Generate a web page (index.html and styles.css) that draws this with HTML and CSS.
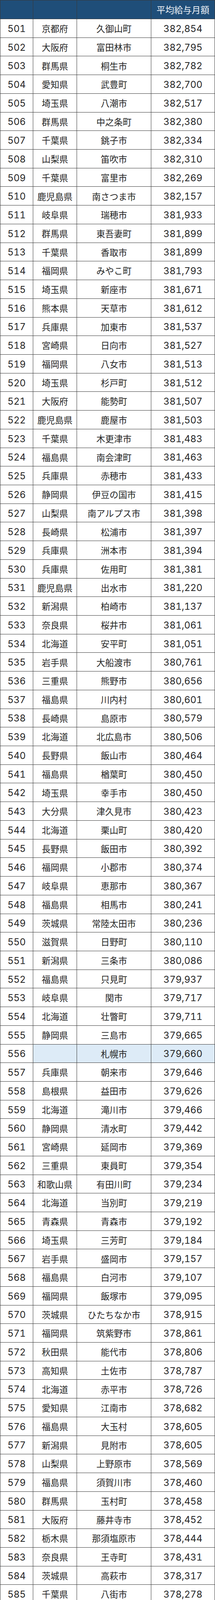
FILE: index.html
```html
<!DOCTYPE html>
<html lang="ja">
<head>
<meta charset="utf-8">
<title>平均給与月額ランキング 501-600</title>
<link rel="stylesheet" href="styles.css">
</head>
<body>
<div class="rank-table">
<div class="cell head"></div><div class="cell head"></div><div class="cell head"></div><div class="cell head jp">平均給与月額</div>
<div class="cell num">501</div><div class="cell jp">京都府</div><div class="cell jp">久御山町</div><div class="cell num">382,854</div>
<div class="cell num">502</div><div class="cell jp">大阪府</div><div class="cell jp">富田林市</div><div class="cell num">382,795</div>
<div class="cell num">503</div><div class="cell jp">群馬県</div><div class="cell jp">桐生市</div><div class="cell num">382,782</div>
<div class="cell num">504</div><div class="cell jp">愛知県</div><div class="cell jp">武豊町</div><div class="cell num">382,700</div>
<div class="cell num">505</div><div class="cell jp">埼玉県</div><div class="cell jp">八潮市</div><div class="cell num">382,517</div>
<div class="cell num">506</div><div class="cell jp">群馬県</div><div class="cell jp">中之条町</div><div class="cell num">382,380</div>
<div class="cell num">507</div><div class="cell jp">千葉県</div><div class="cell jp">銚子市</div><div class="cell num">382,334</div>
<div class="cell num">508</div><div class="cell jp">山梨県</div><div class="cell jp">笛吹市</div><div class="cell num">382,310</div>
<div class="cell num">509</div><div class="cell jp">千葉県</div><div class="cell jp">富里市</div><div class="cell num">382,269</div>
<div class="cell num">510</div><div class="cell jp">鹿児島県</div><div class="cell jp">南さつま市</div><div class="cell num">382,157</div>
<div class="cell num">511</div><div class="cell jp">岐阜県</div><div class="cell jp">瑞穂市</div><div class="cell num">381,933</div>
<div class="cell num">512</div><div class="cell jp">群馬県</div><div class="cell jp">東吾妻町</div><div class="cell num">381,899</div>
<div class="cell num">513</div><div class="cell jp">千葉県</div><div class="cell jp">香取市</div><div class="cell num">381,899</div>
<div class="cell num">514</div><div class="cell jp">福岡県</div><div class="cell jp">みやこ町</div><div class="cell num">381,793</div>
<div class="cell num">515</div><div class="cell jp">埼玉県</div><div class="cell jp">新座市</div><div class="cell num">381,671</div>
<div class="cell num">516</div><div class="cell jp">熊本県</div><div class="cell jp">天草市</div><div class="cell num">381,612</div>
<div class="cell num">517</div><div class="cell jp">兵庫県</div><div class="cell jp">加東市</div><div class="cell num">381,537</div>
<div class="cell num">518</div><div class="cell jp">宮崎県</div><div class="cell jp">日向市</div><div class="cell num">381,527</div>
<div class="cell num">519</div><div class="cell jp">福岡県</div><div class="cell jp">八女市</div><div class="cell num">381,513</div>
<div class="cell num">520</div><div class="cell jp">埼玉県</div><div class="cell jp">杉戸町</div><div class="cell num">381,512</div>
<div class="cell num">521</div><div class="cell jp">大阪府</div><div class="cell jp">能勢町</div><div class="cell num">381,507</div>
<div class="cell num">522</div><div class="cell jp">鹿児島県</div><div class="cell jp">鹿屋市</div><div class="cell num">381,503</div>
<div class="cell num">523</div><div class="cell jp">千葉県</div><div class="cell jp">木更津市</div><div class="cell num">381,483</div>
<div class="cell num">524</div><div class="cell jp">福島県</div><div class="cell jp">南会津町</div><div class="cell num">381,463</div>
<div class="cell num">525</div><div class="cell jp">兵庫県</div><div class="cell jp">赤穂市</div><div class="cell num">381,433</div>
<div class="cell num">526</div><div class="cell jp">静岡県</div><div class="cell jp">伊豆の国市</div><div class="cell num">381,415</div>
<div class="cell num">527</div><div class="cell jp">山梨県</div><div class="cell jp">南アルプス市</div><div class="cell num">381,398</div>
<div class="cell num">528</div><div class="cell jp">長崎県</div><div class="cell jp">松浦市</div><div class="cell num">381,397</div>
<div class="cell num">529</div><div class="cell jp">兵庫県</div><div class="cell jp">洲本市</div><div class="cell num">381,394</div>
<div class="cell num">530</div><div class="cell jp">兵庫県</div><div class="cell jp">佐用町</div><div class="cell num">381,381</div>
<div class="cell num">531</div><div class="cell jp">鹿児島県</div><div class="cell jp">出水市</div><div class="cell num">381,220</div>
<div class="cell num">532</div><div class="cell jp">新潟県</div><div class="cell jp">柏崎市</div><div class="cell num">381,137</div>
<div class="cell num">533</div><div class="cell jp">奈良県</div><div class="cell jp">桜井市</div><div class="cell num">381,061</div>
<div class="cell num">534</div><div class="cell jp">北海道</div><div class="cell jp">安平町</div><div class="cell num">381,051</div>
<div class="cell num">535</div><div class="cell jp">岩手県</div><div class="cell jp">大船渡市</div><div class="cell num">380,761</div>
<div class="cell num">536</div><div class="cell jp">三重県</div><div class="cell jp">熊野市</div><div class="cell num">380,656</div>
<div class="cell num">537</div><div class="cell jp">福島県</div><div class="cell jp">川内村</div><div class="cell num">380,601</div>
<div class="cell num">538</div><div class="cell jp">長崎県</div><div class="cell jp">島原市</div><div class="cell num">380,579</div>
<div class="cell num">539</div><div class="cell jp">北海道</div><div class="cell jp">北広島市</div><div class="cell num">380,506</div>
<div class="cell num">540</div><div class="cell jp">長野県</div><div class="cell jp">飯山市</div><div class="cell num">380,464</div>
<div class="cell num">541</div><div class="cell jp">福島県</div><div class="cell jp">楢葉町</div><div class="cell num">380,450</div>
<div class="cell num">542</div><div class="cell jp">埼玉県</div><div class="cell jp">幸手市</div><div class="cell num">380,450</div>
<div class="cell num">543</div><div class="cell jp">大分県</div><div class="cell jp">津久見市</div><div class="cell num">380,423</div>
<div class="cell num">544</div><div class="cell jp">北海道</div><div class="cell jp">栗山町</div><div class="cell num">380,420</div>
<div class="cell num">545</div><div class="cell jp">長野県</div><div class="cell jp">飯田市</div><div class="cell num">380,392</div>
<div class="cell num">546</div><div class="cell jp">福岡県</div><div class="cell jp">小郡市</div><div class="cell num">380,374</div>
<div class="cell num">547</div><div class="cell jp">岐阜県</div><div class="cell jp">恵那市</div><div class="cell num">380,367</div>
<div class="cell num">548</div><div class="cell jp">福島県</div><div class="cell jp">相馬市</div><div class="cell num">380,241</div>
<div class="cell num">549</div><div class="cell jp">茨城県</div><div class="cell jp">常陸太田市</div><div class="cell num">380,236</div>
<div class="cell num">550</div><div class="cell jp">滋賀県</div><div class="cell jp">日野町</div><div class="cell num">380,110</div>
<div class="cell num">551</div><div class="cell jp">新潟県</div><div class="cell jp">三条市</div><div class="cell num">380,086</div>
<div class="cell num">552</div><div class="cell jp">福島県</div><div class="cell jp">只見町</div><div class="cell num">379,937</div>
<div class="cell num">553</div><div class="cell jp">岐阜県</div><div class="cell jp">関市</div><div class="cell num">379,717</div>
<div class="cell num">554</div><div class="cell jp">北海道</div><div class="cell jp">壮瞥町</div><div class="cell num">379,711</div>
<div class="cell num">555</div><div class="cell jp">静岡県</div><div class="cell jp">三島市</div><div class="cell num">379,665</div>
<div class="cell num">556</div><div class="cell jp hl"></div><div class="cell jp hl">札幌市</div><div class="cell num hl">379,660</div>
<div class="cell num">557</div><div class="cell jp">兵庫県</div><div class="cell jp">朝来市</div><div class="cell num">379,646</div>
<div class="cell num">558</div><div class="cell jp">島根県</div><div class="cell jp">益田市</div><div class="cell num">379,626</div>
<div class="cell num">559</div><div class="cell jp">北海道</div><div class="cell jp">滝川市</div><div class="cell num">379,466</div>
<div class="cell num">560</div><div class="cell jp">静岡県</div><div class="cell jp">清水町</div><div class="cell num">379,442</div>
<div class="cell num">561</div><div class="cell jp">宮崎県</div><div class="cell jp">延岡市</div><div class="cell num">379,369</div>
<div class="cell num">562</div><div class="cell jp">三重県</div><div class="cell jp">東員町</div><div class="cell num">379,354</div>
<div class="cell num">563</div><div class="cell jp">和歌山県</div><div class="cell jp">有田川町</div><div class="cell num">379,234</div>
<div class="cell num">564</div><div class="cell jp">北海道</div><div class="cell jp">当別町</div><div class="cell num">379,219</div>
<div class="cell num">565</div><div class="cell jp">青森県</div><div class="cell jp">青森市</div><div class="cell num">379,192</div>
<div class="cell num">566</div><div class="cell jp">埼玉県</div><div class="cell jp">三芳町</div><div class="cell num">379,184</div>
<div class="cell num">567</div><div class="cell jp">岩手県</div><div class="cell jp">盛岡市</div><div class="cell num">379,157</div>
<div class="cell num">568</div><div class="cell jp">福島県</div><div class="cell jp">白河市</div><div class="cell num">379,107</div>
<div class="cell num">569</div><div class="cell jp">福岡県</div><div class="cell jp">飯塚市</div><div class="cell num">379,095</div>
<div class="cell num">570</div><div class="cell jp">茨城県</div><div class="cell jp">ひたちなか市</div><div class="cell num">378,915</div>
<div class="cell num">571</div><div class="cell jp">福岡県</div><div class="cell jp">筑紫野市</div><div class="cell num">378,861</div>
<div class="cell num">572</div><div class="cell jp">秋田県</div><div class="cell jp">能代市</div><div class="cell num">378,806</div>
<div class="cell num">573</div><div class="cell jp">高知県</div><div class="cell jp">土佐市</div><div class="cell num">378,787</div>
<div class="cell num">574</div><div class="cell jp">北海道</div><div class="cell jp">赤平市</div><div class="cell num">378,726</div>
<div class="cell num">575</div><div class="cell jp">愛知県</div><div class="cell jp">江南市</div><div class="cell num">378,682</div>
<div class="cell num">576</div><div class="cell jp">福島県</div><div class="cell jp">大玉村</div><div class="cell num">378,605</div>
<div class="cell num">577</div><div class="cell jp">新潟県</div><div class="cell jp">見附市</div><div class="cell num">378,605</div>
<div class="cell num">578</div><div class="cell jp">山梨県</div><div class="cell jp">上野原市</div><div class="cell num">378,569</div>
<div class="cell num">579</div><div class="cell jp">福島県</div><div class="cell jp">須賀川市</div><div class="cell num">378,460</div>
<div class="cell num">580</div><div class="cell jp">群馬県</div><div class="cell jp">玉村町</div><div class="cell num">378,458</div>
<div class="cell num">581</div><div class="cell jp">大阪府</div><div class="cell jp">藤井寺市</div><div class="cell num">378,452</div>
<div class="cell num">582</div><div class="cell jp">栃木県</div><div class="cell jp">那須塩原市</div><div class="cell num">378,444</div>
<div class="cell num">583</div><div class="cell jp">奈良県</div><div class="cell jp">王寺町</div><div class="cell num">378,431</div>
<div class="cell num">584</div><div class="cell jp">茨城県</div><div class="cell jp">高萩市</div><div class="cell num">378,317</div>
<div class="cell num">585</div><div class="cell jp">千葉県</div><div class="cell jp">八街市</div><div class="cell num">378,278</div>
<div class="cell num">586</div><div class="cell jp">福島県</div><div class="cell jp">新地町</div><div class="cell num">378,226</div>
<div class="cell num">587</div><div class="cell jp">和歌山県</div><div class="cell jp">かつらぎ町</div><div class="cell num">378,200</div>
<div class="cell num">588</div><div class="cell jp">長崎県</div><div class="cell jp">壱岐市</div><div class="cell num">378,136</div>
<div class="cell num">589</div><div class="cell jp">鹿児島県</div><div class="cell jp">肝付町</div><div class="cell num">378,126</div>
<div class="cell num">590</div><div class="cell jp">岐阜県</div><div class="cell jp">山県市</div><div class="cell num">378,109</div>
<div class="cell num">591</div><div class="cell jp">石川県</div><div class="cell jp">白山市</div><div class="cell num">378,078</div>
<div class="cell num">592</div><div class="cell jp">群馬県</div><div class="cell jp">渋川市</div><div class="cell num">378,058</div>
<div class="cell num">593</div><div class="cell jp">北海道</div><div class="cell jp">千歳市</div><div class="cell num">377,896</div>
<div class="cell num">594</div><div class="cell jp">山形県</div><div class="cell jp">川西町</div><div class="cell num">377,884</div>
<div class="cell num">595</div><div class="cell jp">岐阜県</div><div class="cell jp">中津川市</div><div class="cell num">377,715</div>
<div class="cell num">596</div><div class="cell jp">熊本県</div><div class="cell jp">八代市</div><div class="cell num">377,660</div>
<div class="cell num">597</div><div class="cell jp">栃木県</div><div class="cell jp">大田原市</div><div class="cell num">377,580</div>
<div class="cell num">598</div><div class="cell jp">北海道</div><div class="cell jp">由仁町</div><div class="cell num">377,514</div>
<div class="cell num">599</div><div class="cell jp">福島県</div><div class="cell jp">泉崎村</div><div class="cell num">377,380</div>
<div class="cell num">600</div><div class="cell jp">岩手県</div><div class="cell jp">平泉町</div><div class="cell num">377,376</div>
</div>
</body>
</html>
```
FILE: styles.css
```css
html, body {
  margin: 0;
  padding: 0;
  background: #ffffff;
}

.rank-table {
  display: grid;
  width: 550px;
  box-sizing: border-box;
  grid-template-columns: 83px 111px 189px 162px;
  grid-template-rows: 47px;
  grid-auto-rows: 46.72px;
  gap: 1px;
  padding: 1px;
  background: #383838;
  color: #262626;
}

.cell {
  display: flex;
  align-items: center;
  justify-content: center;
  background: #ffffff;
  white-space: nowrap;
  overflow: hidden;
  line-height: 1;
}

.head {
  background: #1f4e79;
  color: #eef2f7;
}

.jp {
  font-family: "Noto Sans CJK JP", "Noto Sans", sans-serif;
  font-size: 22.5px;
}

.num {
  font-family: Inter, "DejaVu Sans", sans-serif;
  font-size: 24px;
  font-variant-numeric: tabular-nums;
  padding-top: 3px;
}

.cell.hl {
  background: #ddebf7;
}
```
